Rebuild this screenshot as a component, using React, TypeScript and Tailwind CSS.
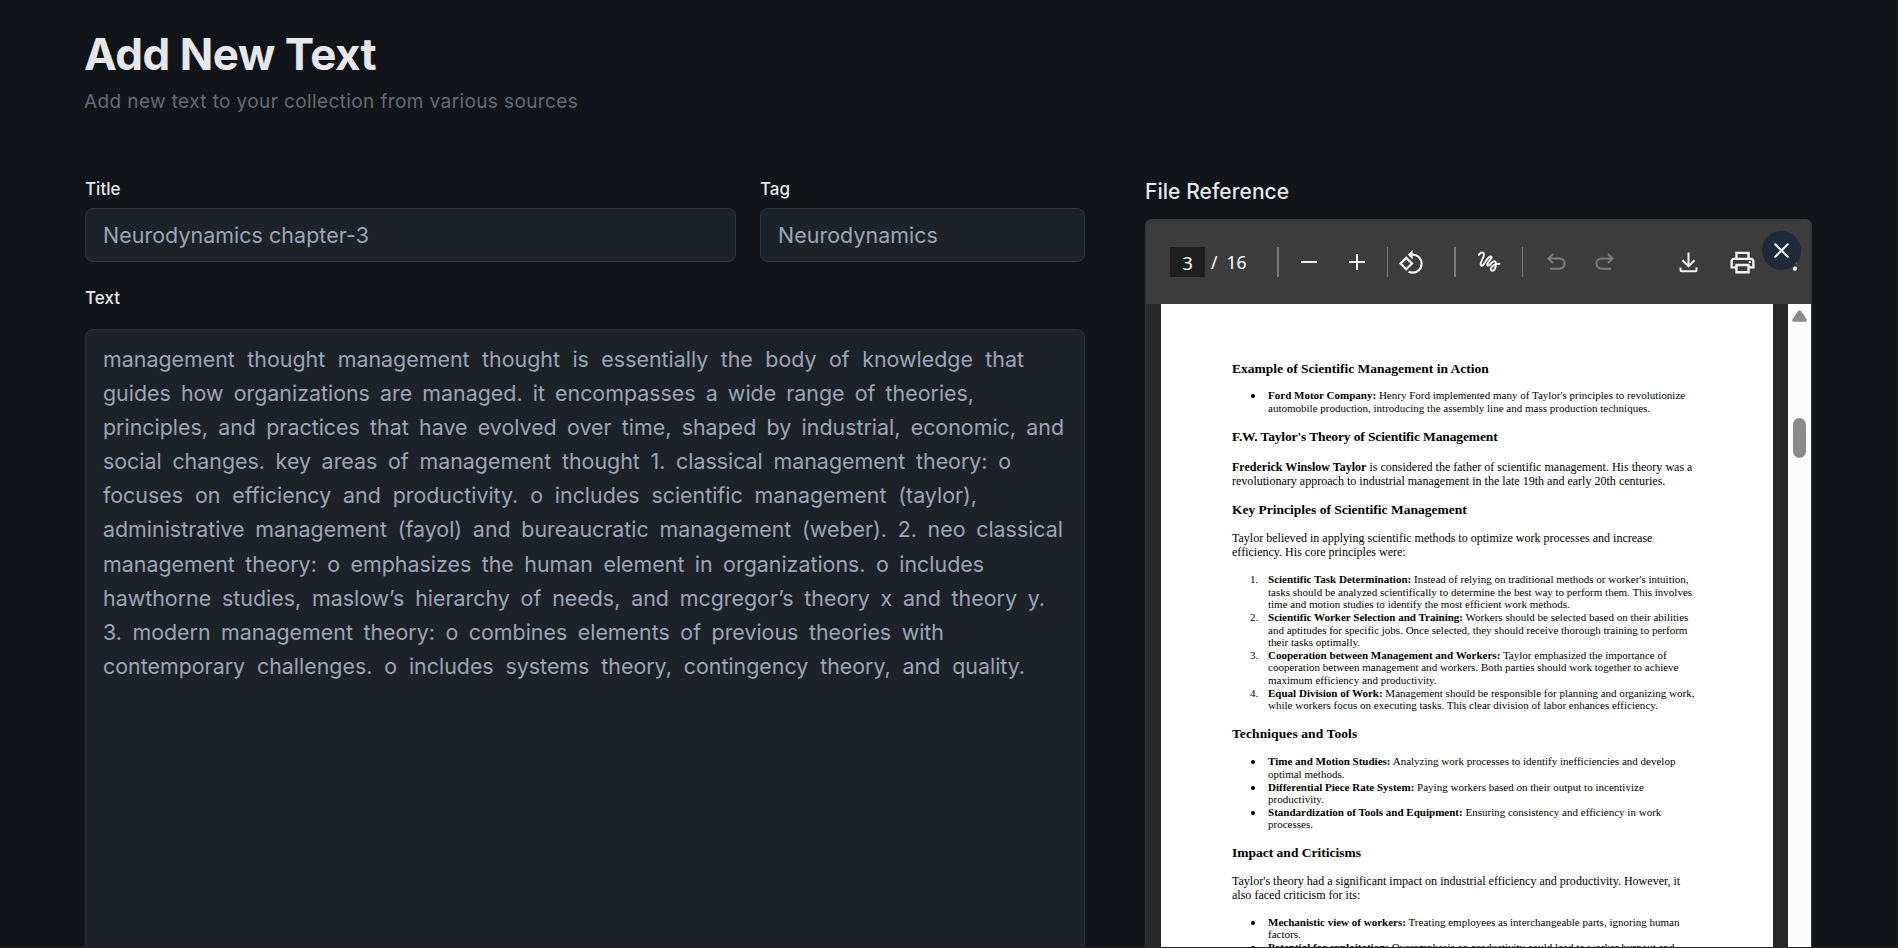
import React, { type ReactNode } from "react";
import { X } from "lucide-react";
import { MdRotate90DegreesCcw, MdOutlinePrint } from "react-icons/md";

const notes: { text: string; width: string }[] = [
  { text: "management thought management thought is essentially the body of knowledge that", width: "w-[921px]" },
  { text: "guides how organizations are managed. it encompasses a wide range of theories,", width: "w-[871px]" },
  { text: "principles, and practices that have evolved over time, shaped by industrial, economic, and", width: "w-[961px]" },
  { text: "social changes. key areas of management thought 1. classical management theory: o", width: "w-[908px]" },
  { text: "focuses on efficiency and productivity. o includes scientific management (taylor),", width: "w-[874px]" },
  { text: "administrative management (fayol) and bureaucratic management (weber). 2. neo classical", width: "w-[960px]" },
  { text: "management theory: o emphasizes the human element in organizations. o includes", width: "w-[881px]" },
  { text: "hawthorne studies, maslow’s hierarchy of needs, and mcgregor’s theory x and theory y.", width: "w-[942px]" },
  { text: "3. modern management theory: o combines elements of previous theories with", width: "w-[841px]" },
  { text: "contemporary challenges. o includes systems theory, contingency theory, and quality.", width: "w-[922px]" },
];

function Field({ label, value }: { label: string; value: string }) {
  return (
    <label className="block">
      <span className="block text-[17px] font-medium leading-6 text-gray-200">{label}</span>
      <span className="mt-[7px] flex h-[54px] items-center rounded-lg border border-[#2d3748] bg-[#1d2128] px-[17px] text-[21.4px] tracking-[0.07px] text-[#9ba6b6]">
        {value}
      </span>
    </label>
  );
}

function Heading({ className, children }: { className: string; children: ReactNode }) {
  return <h3 className={`text-[13.5px] font-bold leading-4 ${className}`}>{children}</h3>;
}

function Item({ marker, title, lines }: { marker?: string; title: string; lines: string[] }) {
  return (
    <li className="flex">
      <span className="w-[18px] shrink-0">
        {marker ?? <i className="ml-px mt-[5px] block size-1 rounded-full bg-black" />}
      </span>
      <div>
        <b>{title}</b> {lines[0]}
        {lines.slice(1).map((line) => (
          <span key={line} className="block">{line}</span>
        ))}
      </div>
    </li>
  );
}

const listClass = "pl-[18px] text-[11.03px] leading-[12.6px]";

function Document() {
  return (
    <article className="w-[612px] shrink-0 overflow-hidden whitespace-nowrap bg-white pl-[71px] pt-[57px] font-['Liberation_Serif',serif] text-black">
      <Heading className="">Example of Scientific Management in Action</Heading>
      <ul className={`mt-[12.3px] ${listClass}`}>
        <Item title="Ford Motor Company:" lines={["Henry Ford implemented many of Taylor's principles to revolutionize", "automobile production, introducing the assembly line and mass production techniques."]} />
      </ul>
      <Heading className="mt-[14.8px] tracking-[-0.13px]">F.W. Taylor's Theory of Scientific Management</Heading>
      <p className="mt-[14.5px] text-[12.04px] leading-[14px]">
        <b>Frederick Winslow Taylor</b> is considered the father of scientific management. His theory was a
        <br />revolutionary approach to industrial management in the late 19th and early 20th centuries.
      </p>
      <Heading className="mt-[14.5px]">Key Principles of Scientific Management</Heading>
      <p className="mt-[12.5px] text-[12.04px] leading-[14px]">
        Taylor believed in applying scientific methods to optimize work processes and increase
        <br />efficiency. His core principles were:
      </p>
      <ol className={`mt-[14.5px] ${listClass}`}>
        <Item marker="1." title="Scientific Task Determination:" lines={["Instead of relying on traditional methods or worker's intuition,", "tasks should be analyzed scientifically to determine the best way to perform them. This involves", "time and motion studies to identify the most efficient work methods."]} />
        <Item marker="2." title="Scientific Worker Selection and Training:" lines={["Workers should be selected based on their abilities", "and aptitudes for specific jobs. Once selected, they should receive thorough training to perform", "their tasks optimally."]} />
        <Item marker="3." title="Cooperation between Management and Workers:" lines={["Taylor emphasized the importance of", "cooperation between management and workers. Both parties should work together to achieve", "maximum efficiency and productivity."]} />
        <Item marker="4." title="Equal Division of Work:" lines={["Management should be responsible for planning and organizing work,", "while workers focus on executing tasks. This clear division of labor enhances efficiency."]} />
      </ol>
      <Heading className="mt-[14px] tracking-[0.1px]">Techniques and Tools</Heading>
      <ul className={`mt-[13.5px] ${listClass}`}>
        <Item title="Time and Motion Studies:" lines={["Analyzing work processes to identify inefficiencies and develop", "optimal methods."]} />
        <Item title="Differential Piece Rate System:" lines={["Paying workers based on their output to incentivize", "productivity."]} />
        <Item title="Standardization of Tools and Equipment:" lines={["Ensuring consistency and efficiency in work", "processes."]} />
      </ul>
      <Heading className="mt-[14.5px]">Impact and Criticisms</Heading>
      <p className="mt-[14px] text-[12.04px] leading-[13.5px]">
        Taylor's theory had a significant impact on industrial efficiency and productivity. However, it
        <br />also faced criticism for its:
      </p>
      <ul className={`mt-[13.5px] ${listClass}`}>
        <Item title="Mechanistic view of workers:" lines={["Treating employees as interchangeable parts, ignoring human", "factors."]} />
        <Item title="Potential for exploitation:" lines={["Overemphasis on productivity could lead to worker burnout and"]} />
      </ul>
    </article>
  );
}

function Toolbar() {
  return (
    <div className="relative flex h-[84px] shrink-0 items-center bg-[#3c3c3c] pl-6 font-['Noto_Sans',sans-serif] text-[17.5px] text-white">
      <span className="flex h-[30px] w-[35px] items-center justify-center bg-[#1e1e1e] pt-px text-[18.5px]">3</span>
      <span className="ml-[6px] w-[66px] whitespace-pre pt-px">/&nbsp; 16</span>
      <span className="h-[30px] w-[2px] bg-[#7a7a7a]" />
      <span className="ml-[22px] h-[2px] w-4 bg-[#f1f1f1]" />
      <svg className="ml-8 size-4" viewBox="0 0 16 16" fill="#f1f1f1"><path d="M7 0h2v7h7v2H9v7H7V9H0V7h7z" /></svg>
      <span className="ml-[22px] h-[30px] w-px bg-[#7a7a7a]" />
      <MdRotate90DegreesCcw className="ml-[10px] size-[27px] text-[#f1f1f1]" />
      <span className="ml-[29px] h-[30px] w-[2px] bg-[#7a7a7a]" />
      <svg className="ml-[21px] size-6" viewBox="0 0 24 24" fill="none" stroke="#f1f1f1" strokeWidth="2" strokeLinecap="round" strokeLinejoin="round">
        <path d="M2 4.8C3.6 2.2 6.8 1.6 7 4.6C7 8 2.2 12.6 4 15.2C6.6 18 9.6 6.4 13.6 6.4C17.4 7.2 9 12.4 10.4 15C12.4 17.4 14.8 10.4 17.6 11.2C20.4 12.6 18.4 20.6 15.4 20.8C12 20.4 14.2 13.8 22.4 13.8" />
      </svg>
      <span className="ml-[21px] h-[30px] w-px bg-[#7a7a7a]" />
      <svg className="ml-6 h-[18px] w-[19px]" viewBox="0 0 19 18" fill="none" stroke="#7d7d7d" strokeWidth="2">
        <path d="M6 1L1.5 5.5L6 10M2 5.5H12.5A5 5 0 0 1 12.5 15.7H3" />
      </svg>
      <svg className="ml-[29px] h-[18px] w-[19px]" viewBox="0 0 19 18" fill="none" stroke="#7d7d7d" strokeWidth="2">
        <path d="M13 1L17.5 5.5L13 10M17 5.5H6.5A5 5 0 0 0 6.5 15.7H16" />
      </svg>
      <svg className="ml-[65px] h-[21px] w-[19px]" viewBox="0 0 19 21" fill="none" stroke="#f1f1f1" strokeWidth="2">
        <path d="M9.5 0.5V14M3.5 8.3L9.5 14.3L15.5 8.3M1.5 15.5V18.3Q1.5 19.3 2.5 19.3H16.5Q17.5 19.3 17.5 18.3V15.5" />
      </svg>
      <MdOutlinePrint className="ml-[30px] size-[29px] text-[#f1f1f1]" />
      <svg className="ml-[35px] mt-[2px] h-[20px] w-[6px]" viewBox="0 0 6 20" fill="#f1f1f1">
        <circle cx="3" cy="2" r="2" /><circle cx="3" cy="9" r="2" /><circle cx="3" cy="15.7" r="2.1" />
      </svg>
      <button className="absolute right-[10px] top-[11px] flex size-[39px] items-center justify-center rounded-full bg-gray-800 text-gray-100">
        <X size={25} />
      </button>
    </div>
  );
}

export default function App() {
  return (
    <main className="h-[948px] overflow-hidden border-b border-r border-[#242424] bg-[#111418] pl-[85px] pr-[85px] font-['Inter',sans-serif]">
      <h1 className="-ml-px pt-[26px] text-[44px] font-bold leading-[56px] tracking-[-0.5px] text-gray-200">Add New Text</h1>
      <p className="-ml-px mt-[6px] text-[19px] leading-7 tracking-[0.39px] text-[#666a73]">Add new text to your collection from various sources</p>
      <div className="mt-[61px] flex items-start justify-between">
        <section className="w-[1000px]">
          <div className="grid grid-cols-[651px_325px] gap-6">
            <Field label="Title" value="Neurodynamics chapter-3" />
            <Field label="Tag" value="Neurodynamics" />
          </div>
          <h2 className="mt-[24px] text-[17px] font-medium leading-6 text-gray-200">Text</h2>
          <div className="mt-[19px] h-[640px] rounded-lg border border-[#2b3036] bg-[#1d2128] px-[17px] pt-[12px] text-[21.4px] leading-[34.1px] text-[#9ba6b6]">
            {notes.map((line) => (
              <p key={line.text} className={`whitespace-nowrap [text-align-last:justify] ${line.width}`}>{line.text}</p>
            ))}
          </div>
        </section>
        <section className="w-[667px]">
          <h2 className="text-[21px] font-medium leading-[30px] tracking-[0.05px] text-gray-200">File Reference</h2>
          <div className="mt-[12px] flex h-[760px] flex-col overflow-hidden rounded-md border border-[#2d3748] bg-[#282828]">
            <Toolbar />
            <div className="flex min-h-0 flex-1 justify-between pl-[15px]">
              <Document />
              <div className="flex w-[23px] flex-col items-center bg-[#fcfcfc] pt-[6px]">
                <svg className="h-3 w-[15px]" viewBox="0 0 15 12" fill="#8b8b8b"><path d="M6 1.2Q7.5-.5 9 1.2L14.4 9Q15.6 11.6 13 11.8H2Q-.6 11.6.6 9Z" /></svg>
                <span className="mt-[96px] h-10 w-[13px] rounded-full bg-[#8b8b8b]" />
              </div>
            </div>
          </div>
        </section>
      </div>
    </main>
  );
}
